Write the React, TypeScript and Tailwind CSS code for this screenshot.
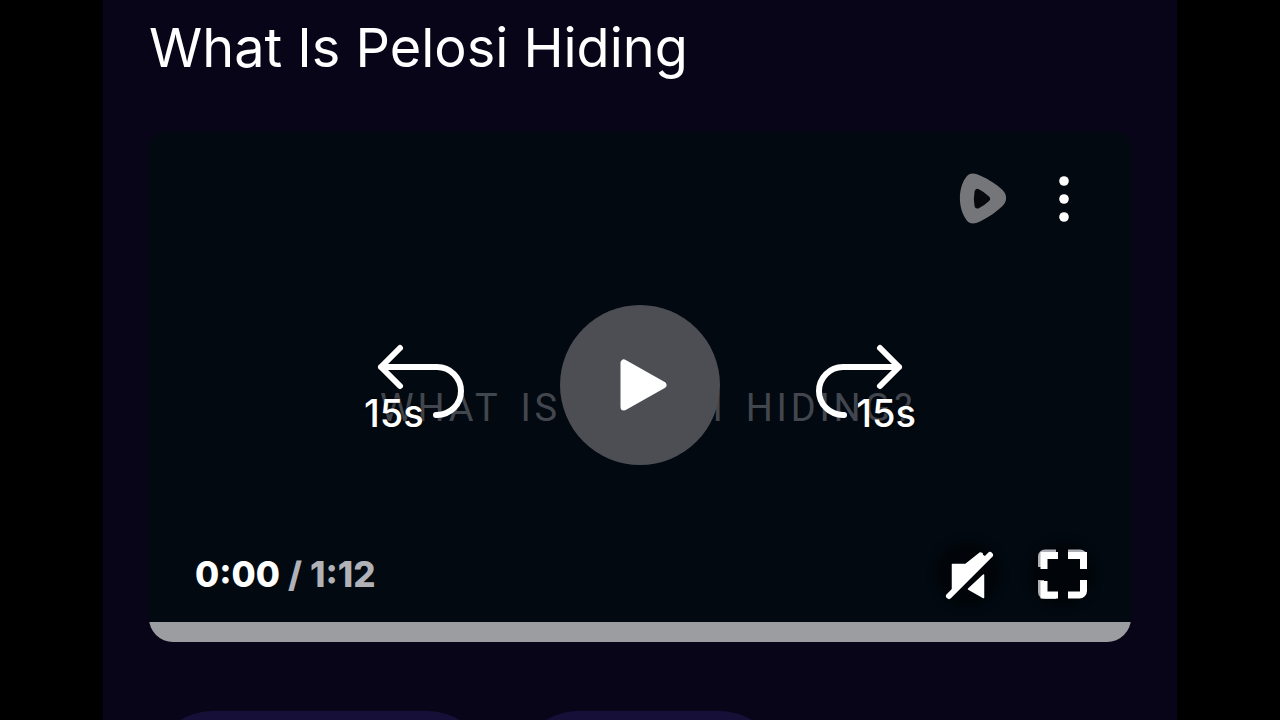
import React from "react";

const curve = "M36 5 17 24l19 19M17 24h56a24 24 0 0 1 0 48h-1";

function SkipButton({ direction }: { direction: "back" | "forward" }) {
  const forward = direction === "forward";
  return (
    <button
      type="button"
      aria-label={forward ? "Forward 15 seconds" : "Back 15 seconds"}
      className="relative h-[84px] w-[100px] shrink-0 text-white"
    >
      <svg
        viewBox="0 0 100 84"
        className="block h-full w-full"
        fill="none"
        stroke="currentColor"
        strokeWidth="6"
        strokeLinecap="round"
        strokeLinejoin="round"
        aria-hidden="true"
      >
        <path d={curve} transform={forward ? "translate(100 0) scale(-1 1)" : undefined} />
      </svg>
      <span
        className={
          forward
            ? "absolute right-0 bottom-0 text-[38px] leading-7 font-medium [text-shadow:0_0_3px_#000]"
            : "absolute bottom-0 left-0 text-[38px] leading-7 font-medium [text-shadow:0_0_3px_#000]"
        }
      >
        15s
      </span>
    </button>
  );
}

export default function App() {
  return (
    <div className="h-screen overflow-hidden bg-black px-[103px] font-['Inter','Liberation_Sans',sans-serif]">
      <main className="min-h-full bg-[#090519] px-[46px] pt-5">
        <h1 className="text-[54px] leading-14 font-normal text-white">What Is Pelosi Hiding</h1>

        <section
          aria-label="Video player"
          className="relative mt-14 flex aspect-[982/510] flex-col overflow-hidden rounded-t-2xl rounded-b-3xl bg-[#020910]"
        >
          <div className="flex items-center justify-end gap-8 px-[43px] pt-10">
            <a href="#rumble" aria-label="Rumble" className="block">
              <svg viewBox="0 0 50 54" className="block h-[54px] w-[50px]" aria-hidden="true">
                <path
                  fill="#74767a"
                  d="M9 4C12 .5 17 .8 22 3.500 31 7.500 38 12 44 17.500c5.500 5 5.500 12 0 17C38 40 31 45 22 49.500c-5 2.500-10 3-13-.8C-.5 37-.5 15 9 4Z"
                />
                <path
                  d="M19.500 20c-.8 4-.8 9 0 13.500 3.500-1.700 6.500-4 9.500-6.800-3-2.700-6-5-9.500-6.700Z"
                  fill="#05090e"
                  stroke="#05090e"
                  strokeWidth="6"
                  strokeLinejoin="round"
                />
              </svg>
            </a>
            <button type="button" aria-label="More options" className="flex h-[54px] w-12 items-center justify-center">
              <svg viewBox="0 0 12 48" className="h-12 w-3" fill="#fff" aria-hidden="true">
                <circle cx="6" cy="6" r="4.800" />
                <circle cx="6" cy="24" r="4.800" />
                <circle cx="6" cy="42" r="4.800" />
              </svg>
            </button>
          </div>

          <div className="relative flex flex-1 items-center justify-center pb-1">
            <p className="absolute inset-x-0 left-4 top-[162px] mx-auto flex w-[536px] justify-between font-['Roboto','Liberation_Sans',sans-serif] text-[38px] leading-10 tracking-widest text-[#42464e]">
              <span>WHAT</span> <span>IS</span> <span>PELOSI</span> <span>HIDING?</span>
            </p>
            <div className="relative flex items-center gap-24">
              <SkipButton direction="back" />
              <button
                type="button"
                aria-label="Play"
                className="flex size-40 items-center justify-center rounded-full bg-[#4c4e54]"
              >
                <svg viewBox="0 0 50 56" className="ml-2 h-14 w-[50px]" aria-hidden="true">
                  <path
                    d="M5 6v44L44 28Z"
                    fill="#fff"
                    stroke="#fff"
                    strokeWidth="7"
                    strokeLinejoin="round"
                  />
                </svg>
              </button>
              <SkipButton direction="forward" />
            </div>
          </div>

          <div className="flex items-center justify-between px-[42px] pb-[21px]">
            <p className="flex items-center gap-2 pl-1 text-[35px] leading-10 font-extrabold text-[#b1b2b8]">
              <span className="text-white">0:00</span>
              <span>/</span>
              <span>1:12</span>
            </p>
            <div className="flex items-center gap-10">
              <button type="button" aria-label="Unmute" className="rounded-full bg-black/40 shadow-[0_0_8px_6px_rgba(0,0,0,0.4)]">
                <svg
                  viewBox="0 0 54 54"
                  className="block size-[54px]"
                  fill="#fff"
                  stroke="#fff"
                  strokeWidth="1.500"
                  strokeLinejoin="round"
                  aria-hidden="true"
                >
                  <path d="M11.500 17.500h13L39 6l2 .5.500 2L44 10 11.500 43Z" />
                  <path d="M42.500 28v22.500L27.500 42Z" />
                  <path d="M8 49 49 8" strokeWidth="6" strokeLinecap="round" />
                </svg>
              </button>
              <button type="button" aria-label="Full screen" className="rounded-full bg-black/40 shadow-[0_0_8px_6px_rgba(0,0,0,0.4)]">
                <svg viewBox="0 0 54 54" className="block size-[54px]" fill="none" strokeWidth="6" aria-hidden="true">
                  <path
                    stroke="#aeaeb5"
                    d="M21 5.500h-11a4 4 0 0 0-4 4V20M33 5.500h12a4 4 0 0 1 4 4V22M6 33v12a4 4 0 0 0 4 4h11"
                  />
                  <path
                    stroke="#fff"
                    strokeWidth="7"
                    d="M23 8.500H9V22M33 8.500h15.500V22M9 34v14h14M33 48h11.500a4 4 0 0 0 4-4V33"
                  />
                </svg>
              </button>
            </div>
          </div>

          <div
            role="progressbar"
            aria-label="Playback position"
            aria-valuemin={0}
            aria-valuemax={72}
            aria-valuenow={0}
            className="h-5 bg-[#9c9da1]"
          />
        </section>

        <div className="mt-[69px] flex gap-6" aria-hidden="true">
          <div className="h-32 w-[342px] rounded-full bg-[#160f38]" />
          <div className="h-32 w-[268px] rounded-full bg-[#160f38]" />
        </div>
      </main>
    </div>
  );
}
